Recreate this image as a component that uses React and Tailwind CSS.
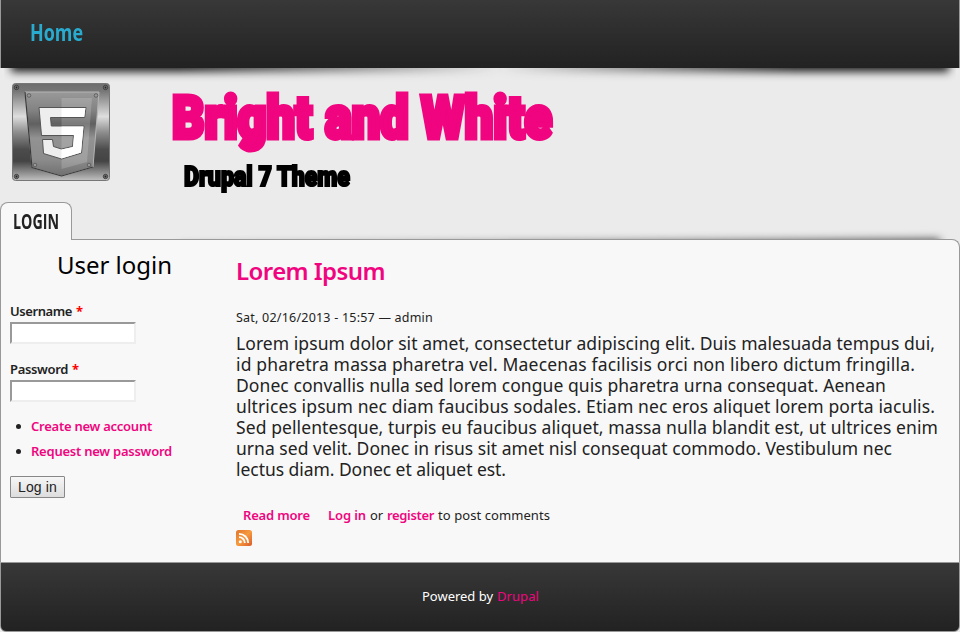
import { useLayoutEffect, useRef } from "react";

// Sets a run of text to an exact measure, by tracking or by condensing the glyphs.
function Fit({ w, squeeze = false, className = "", children }) {
  const outer = useRef(null);
  const inner = useRef(null);
  useLayoutEffect(() => {
    const el = inner.current;
    el.style.letterSpacing = "0px";
    el.style.transform = "none";
    const natural = el.getBoundingClientRect().width;
    outer.current.style.width = w + "px";
    if (squeeze) el.style.transform = `scaleX(${w / natural})`;
    else el.style.letterSpacing = (w - natural) / el.textContent.length + "px";
  }, [w, squeeze]);
  return (
    <span ref={outer} className={"inline-block whitespace-nowrap " + className}>
      <span ref={inner} className="inline-block origin-left">{children}</span>
    </span>
  );
}

const lines = [
  ["Lorem ipsum dolor sit amet, consectetur adipiscing elit. Duis malesuada tempus dui,", 699],
  ["id pharetra massa pharetra vel. Maecenas facilisis orci non libero dictum fringilla.", 679],
  ["Donec convallis nulla sed lorem congue quis pharetra urna consequat. Aenean", 650],
  ["ultrices ipsum nec diam faucibus sodales. Etiam nec eros aliquet lorem porta iaculis.", 699],
  ["Sed pellentesque, turpis eu faucibus aliquet, massa nulla blandit est, ut ultrices enim", 702],
  ["urna sed velit. Donec in risus sit amet nisl consequat commodo. Vestibulum nec", 656],
  ["lectus diam. Donec et aliquet est.", 270],
];

function Screw({ x, y, r = 2.2 }) {
  return (
    <g>
      <circle cx={x} cy={y} r={r} fill="#777" stroke="#333" strokeWidth="0.8" />
      <circle cx={x} cy={y} r={r / 2.4} fill="#222" />
    </g>
  );
}

function Rivet({ x, y }) {
  return <circle cx={x} cy={y} r="1.8" fill="#999" stroke="#555" strokeWidth="0.8" />;
}

function Logo() {
  return (
    <svg width="98" height="98" viewBox="0 0 98 98" className="block">
      <defs>
        <linearGradient id="plate" x1="0" y1="0" x2="0" y2="1">
          <stop offset="0" stopColor="#6e6e6e" />
          <stop offset="0.08" stopColor="#777" />
          <stop offset="0.34" stopColor="#dedede" />
          <stop offset="0.5" stopColor="#8f8f8f" />
          <stop offset="0.68" stopColor="#4c4c4c" />
          <stop offset="0.8" stopColor="#444" />
          <stop offset="1" stopColor="#c0c0c0" />
        </linearGradient>
        <linearGradient id="shield" x1="0" y1="0" x2="0" y2="1">
          <stop offset="0" stopColor="#999" />
          <stop offset="0.22" stopColor="#828282" />
          <stop offset="0.38" stopColor="#606060" />
          <stop offset="0.55" stopColor="#929292" />
          <stop offset="0.8" stopColor="#8c8c8c" />
          <stop offset="1" stopColor="#707070" />
        </linearGradient>
      </defs>
      <rect x="0.5" y="0.5" width="97" height="97" rx="3" fill="url(#plate)" stroke="#777" />
      <path d="M13 9H87L81 84L49.5 93L20 84.5Z" fill="url(#shield)" stroke="#b4b4b4" />
      <path d="M13 9L20 84.5L49.5 93L81 84" fill="none" stroke="#3a3a3a" strokeWidth="1.2" />
      <path d="M49.5 15H80L75 79L49.5 86Z" fill="#fff" fillOpacity="0.17" />
      <path d="M27 24.5H74L72.7 34.5H38.5L39.3 43H72L69.5 70L49.5 76L31.5 70.5L30.5 56.5H40.5L41.5 63.5L49.5 66L60.5 63.5L61.5 52.5H29.5Z" fill="#eee" stroke="#555" />
      <path d="M49.5 25H73.4L72.2 34H49.5ZM49.5 43.5H71.5L69 69.6L49.5 75.5V66.5L61 63.9L62 52H49.5Z" fill="#fff" />
      <Screw x={4.5} y={4.5} />
      <Screw x={93.5} y={4.5} />
      <Screw x={4.5} y={93.5} />
      <Screw x={93.5} y={93.5} />
      <Rivet x={17} y={12.5} />
      <Rivet x={84} y={12.5} />
      <Rivet x={23} y={82} />
      <Rivet x={77} y={82} />
    </svg>
  );
}

function Rss() {
  return (
    <svg width="16" height="16" viewBox="0 0 16 16" className="block">
      <defs>
        <linearGradient id="rss" x1="0" y1="0" x2="1" y2="1">
          <stop offset="0" stopColor="#e0752c" />
          <stop offset="0.5" stopColor="#f79a3e" />
          <stop offset="1" stopColor="#d95b29" />
        </linearGradient>
      </defs>
      <rect width="16" height="16" rx="2.5" fill="url(#rss)" />
      <circle cx="4.3" cy="11.7" r="1.5" fill="#fff" />
      <path d="M3 7.2A5.8 5.8 0 0 1 8.8 13M3 3.8A9.2 9.2 0 0 1 12.2 13" fill="none" stroke="#fff" strokeWidth="1.8" />
    </svg>
  );
}

function Field({ label, w }) {
  return (
    <div className="h-[58px]">
      <label className="flex h-[19px] text-[13px] leading-[19px] font-semibold">
        <Fit w={w}>{label}</Fit>
        <span className="ml-[4px] font-bold text-[#f00]">*</span>
      </label>
      <input className="mt-[1px] block h-[22px] w-[126px] border-2 border-t-[#999] border-r-[#eee] border-b-[#eee] border-l-[#999] bg-white" />
    </div>
  );
}

export default function App() {
  return (
    <div className="flex h-[632px] w-[960px] flex-col overflow-hidden bg-[#ebebeb] font-['Noto_Sans',sans-serif] text-[#222]">
      <header className="relative z-10 h-[68px] shrink-0 border-x border-[#999]">
        <div className="absolute top-[68px] left-[3px] h-[14px] w-[500px] overflow-hidden mask-r-from-35% mask-r-to-100%">
          <div className="mt-[-25px] ml-[7px] h-[25px] w-[600px] shadow-[0_4px_9px_#222]" />
        </div>
        <div className="absolute top-[68px] right-[3px] h-[14px] w-[460px] overflow-hidden mask-l-from-35% mask-l-to-100%">
          <div className="mt-[-25px] mr-[7px] ml-[-100px] h-[25px] shadow-[0_4px_9px_#222]" />
        </div>
        <nav className="relative h-[68px] bg-linear-to-b from-[#383838] to-[#222] pt-[16px] pl-[29px] font-['Open_Sans',sans-serif] text-[24px] leading-[32px] font-bold text-[#29abd0]">
          <Fit w={53} squeeze>Home</Fit>
        </nav>
      </header>

      <section className="flex h-[134px] shrink-0 pt-[15px] pl-[12px]">
        <Logo />
        <div className="ml-[62px] font-[Roboto,sans-serif] font-black">
          <h1 className="h-[70px] text-[59px] leading-[69px] text-[#f0047f] [-webkit-text-stroke:5px_#f0047f]">
            <Fit w={380} squeeze>Bright and White</Fit>
          </h1>
          <h2 className="ml-[12px] h-[40px] text-[28px] leading-[47px] text-black [-webkit-text-stroke:2.2px_#000]">
            <Fit w={166} squeeze>Drupal 7 Theme</Fit>
          </h2>
        </div>
      </section>

      <div className="relative h-[37px] shrink-0">
        <div className="absolute right-[20px] bottom-[-43px] h-[40px] w-[760px] origin-top-right rotate-[-0.500deg] shadow-[0_-3px_9px_#444]" />
        <div className="relative z-20 h-[38px] w-[72px] rounded-t-[8px] border border-b-0 border-[#999] bg-[#f8f8f8] pl-[12px] font-['Open_Sans',sans-serif] text-[21px] leading-[37px] font-bold">
          <Fit w={46} squeeze>LOGIN</Fit>
        </div>
      </div>

      <main className="relative z-10 flex h-[323px] shrink-0 rounded-tr-[8px] border border-b-0 border-[#999] bg-[#f8f8f8]">
        <aside className="w-[235px] pl-[9px]">
          <h2 className="h-[62px] pt-[8px] pl-[47px] text-[24px] leading-[34px] text-black"><Fit w={115}>User login</Fit></h2>
          <Field label="Username" w={62} />
          <Field label="Password" w={58} />
          <ul className="-mt-[4px] h-[62px] text-[13px] leading-[25px] font-semibold text-[#f0047f]">
            <li className="flex items-center"><i className="mr-[10px] ml-[6px] size-[5px] rounded-full bg-[#222]" /><Fit w={121}>Create new account</Fit></li>
            <li className="flex items-center"><i className="mr-[10px] ml-[6px] size-[5px] rounded-full bg-[#222]" /><Fit w={141}>Request new password</Fit></li>
          </ul>
          <button className="block h-[22px] w-[55px] rounded-[1px] border border-[#888] bg-linear-to-b from-[#f6f6f6] to-[#ddd] font-['Liberation_Sans',sans-serif] text-[14px] leading-[19px]">
            <Fit w={39}>Log in</Fit>
          </button>
        </aside>
        <article>
          <h2 className="h-[68px] pt-[14px] text-[24px] leading-[34px] font-semibold text-[#f0047f]"><Fit w={149}>Lorem Ipsum</Fit></h2>
          <p className="h-[25px] text-[12.5px] leading-[19px]"><Fit w={197}>Sat, 02/16/2013 - 15:57 — admin</Fit></p>
          <div className="h-[172px] text-[17.5px] leading-[21px]">
            {lines.map(([t, w]) => <p key={t} className="h-[21px]"><Fit w={w}>{t}</Fit></p>)}
          </div>
          <div className="flex h-[25px] pl-[7px] text-[13px] leading-[20px]">
            <Fit w={67} className="mr-[18px] font-semibold text-[#f0047f]">Read more</Fit>
            <Fit w={38} className="mr-[4px] font-semibold text-[#f0047f]">Log in</Fit>
            <Fit w={13} className="mr-[4px]">or</Fit>
            <Fit w={47} className="mr-[4px] font-semibold text-[#f0047f]">register</Fit>
            <Fit w={112}>to post comments</Fit>
          </div>
          <Rss />
        </article>
      </main>

      <footer className="flex h-[70px] shrink-0 justify-center rounded-b-[6px] border border-[#999] bg-linear-to-b from-[#383838] to-[#222] pt-[23px] pl-px text-[13px] leading-[20px] text-white">
        <Fit w={71} className="mr-[4px]">Powered by</Fit>
        <Fit w={42} className="text-[#f0047f]">Drupal</Fit>
      </footer>
    </div>
  );
}
